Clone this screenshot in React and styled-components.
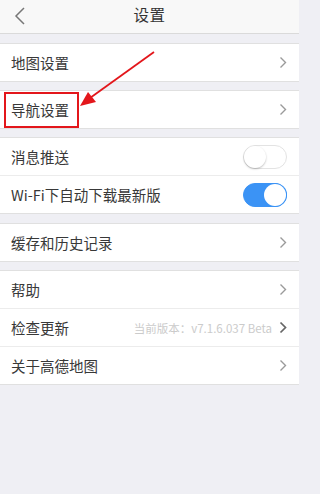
import React, { useState } from 'react';
import styled, { createGlobalStyle } from 'styled-components';

const GlobalStyle = createGlobalStyle`
  html, body {
    margin: 0;
    padding: 0;
    background: #efeff4;
  }
  body {
    font-family: "Noto Sans CJK SC", "Liberation Sans", sans-serif;
  }
`;

const Page = styled.div`
  position: relative;
  width: 299px;
  height: 494px;
  overflow: hidden;
  background: #efeff4;
`;

const Header = styled.div`
  position: relative;
  height: 33px;
  display: flex;
  align-items: center;
  justify-content: center;
  background: #f8f8f8;
  border-bottom: 1px solid #dadada;
`;

const BackButton = styled.div`
  position: absolute;
  left: 14px;
  top: 7px;
  width: 12px;
  height: 18px;
  display: flex;
`;

const Title = styled.div`
  font-size: 15.5px;
  color: #333;
  letter-spacing: 0.5px;
  margin-bottom: 5px;
`;

const Group = styled.div`
  margin-top: ${p => p.$gap || 8}px;
  background: #fff;
  border-top: 1px solid #e0e0e0;
  border-bottom: 1px solid #e0e0e0;
`;

const Row = styled.div`
  position: relative;
  height: 37px;
  display: flex;
  align-items: center;
  padding: 0 12px 0 11px;
  & + & {
    border-top: 1px solid #ececec;
  }
`;

const Label = styled.div`
  flex: 1;
  font-size: 14.5px;
  color: #383838;
  white-space: nowrap;
`;

const Hint = styled.div`
  font-size: 11.5px;
  color: #cbcbcb;
  margin-right: 7px;
  white-space: nowrap;
`;

const Track = styled.div`
  position: relative;
  width: 44px;
  height: 24px;
  box-sizing: border-box;
  border-radius: 12px;
  background: ${p => (p.$on ? '#3b93f5' : '#fff')};
  border: 1px solid ${p => (p.$on ? '#3b93f5' : '#e3e3e3')};
  cursor: pointer;
`;

const Knob = styled.div`
  position: absolute;
  top: 0;
  left: ${p => (p.$on ? '20px' : '0')};
  width: 22px;
  height: 22px;
  border-radius: 50%;
  background: #fff;
  box-shadow: ${p => (p.$on ? '0 0 0 1px #3b93f5' : '0 1px 2px rgba(0,0,0,0.25)')};
`;

const Highlight = styled.div`
  position: absolute;
  left: 4px;
  top: 1px;
  width: 71px;
  height: 32px;
  border: 2px solid #e3161b;
`;

const Annotation = styled.svg`
  position: absolute;
  left: 0;
  top: 0;
  pointer-events: none;
`;

const Chevron = ({ dark }) => (
  <svg width="8" height="13" viewBox="0 0 8 13">
    <polyline
      points="1.5,1.5 6.5,6.5 1.5,11.5"
      fill="none"
      stroke={dark ? '#666' : '#9a9a9a'}
      strokeWidth={dark ? 1.7 : 1.4}
    />
  </svg>
);

const Toggle = ({ on, onClick }) => (
  <Track $on={on} onClick={onClick}>
    <Knob $on={on} />
  </Track>
);

export default function App() {
  const [push, setPush] = useState(false);
  const [wifi, setWifi] = useState(true);

  return (
    <Page>
      <GlobalStyle />
      <Header>
        <BackButton>
          <svg width="12" height="18" viewBox="0 0 12 18">
            <polyline points="10,1 2,9 10,17" fill="none" stroke="#777" strokeWidth="1.5" />
          </svg>
        </BackButton>
        <Title>设置</Title>
      </Header>

      <Group $gap={9}>
        <Row>
          <Label>地图设置</Label>
          <Chevron />
        </Row>
      </Group>

      <Group>
        <Row>
          <Label>导航设置</Label>
          <Chevron />
          <Highlight />
        </Row>
      </Group>

      <Group>
        <Row>
          <Label>消息推送</Label>
          <Toggle on={push} onClick={() => setPush(!push)} />
        </Row>
        <Row>
          <Label>Wi-Fi下自动下载最新版</Label>
          <Toggle on={wifi} onClick={() => setWifi(!wifi)} />
        </Row>
      </Group>

      <Group $gap={9}>
        <Row>
          <Label>缓存和历史记录</Label>
          <Chevron />
        </Row>
      </Group>

      <Group>
        <Row>
          <Label>帮助</Label>
          <Chevron />
        </Row>
        <Row>
          <Label>检查更新</Label>
          <Hint>当前版本：v7.1.6.037 Beta</Hint>
          <Chevron dark />
        </Row>
        <Row>
          <Label>关于高德地图</Label>
          <Chevron />
        </Row>
      </Group>

      <Annotation width="299" height="494" viewBox="0 0 299 494">
        <line x1="154" y1="52" x2="90" y2="98" stroke="#e3161b" strokeWidth="1.8" />
        <polygon points="80,106 88,92 96,102" fill="#e3161b" />
      </Annotation>
    </Page>
  );
}
